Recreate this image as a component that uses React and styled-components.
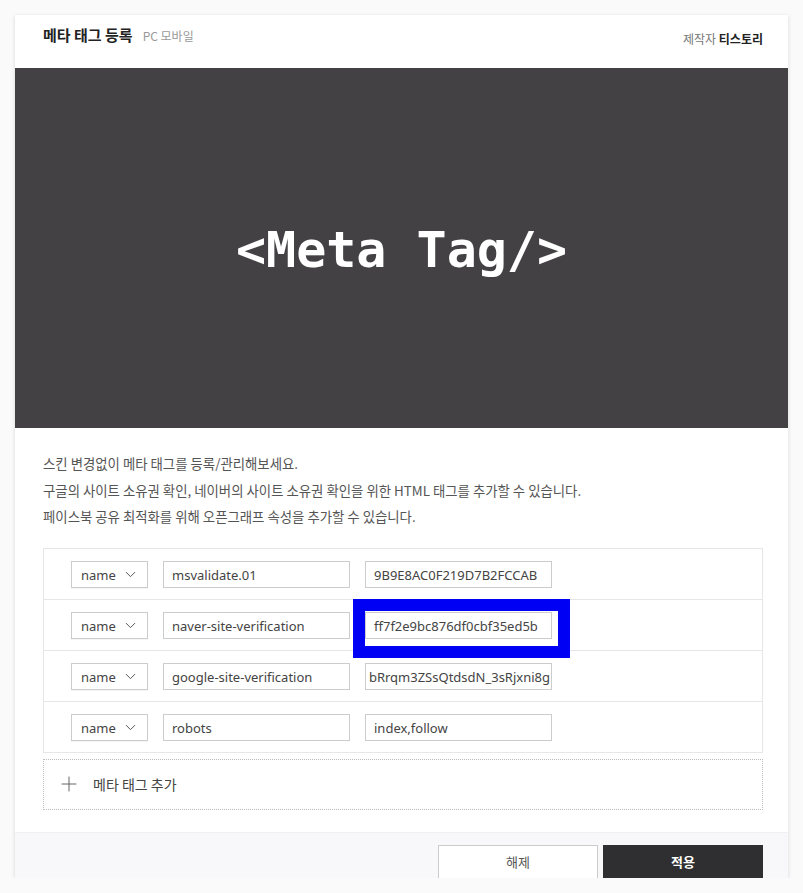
import React from 'react'
import styled, { createGlobalStyle } from 'styled-components'
import { ChevronDown, Plus } from 'lucide-react'

const GlobalStyle = createGlobalStyle`
  html, body {
    margin: 0;
    padding: 0;
    background: #fafafa;
  }
  body {
    font-family: "Noto Sans", "Noto Sans CJK KR", sans-serif;
    color: #333;
  }
`

const metas = [
  { type: 'name', key: 'msvalidate.01', value: '9B9E8AC0F219D7B2FCCAB' },
  { type: 'name', key: 'naver-site-verification', value: 'ff7f2e9bc876df0cbf35ed5b', marked: true },
  { type: 'name', key: 'google-site-verification', value: 'bRrqm3ZSsQtdsdN_3sRjxni8g', tail: true },
  { type: 'name', key: 'robots', value: 'index,follow' },
]

export default function App() {
  return (
    <>
      <GlobalStyle />
      <Page>
        <Card>
          <Header>
            <TitleGroup>
              <Title>메타 태그 등록</Title>
              <Platforms>PC 모바일</Platforms>
            </TitleGroup>
            <Author>
              제작자 <strong>티스토리</strong>
            </Author>
          </Header>

          <Banner>
            <BannerText>&lt;Meta Tag/&gt;</BannerText>
          </Banner>

          <Body>
            <Intro>
              <p>스킨 변경없이 메타 태그를 등록/관리해보세요.</p>
              <p>구글의 사이트 소유권 확인, 네이버의 사이트 소유권 확인을 위한 HTML 태그를 추가할 수 있습니다.</p>
              <p>페이스북 공유 최적화를 위해 오픈그래프 속성을 추가할 수 있습니다.</p>
            </Intro>

            <TagList>
              {metas.map((m) => (
                <TagRow key={m.key}>
                  <Select>
                    <span>{m.type}</span>
                    <ChevronDown size={17} strokeWidth={1.4} color="#555" />
                  </Select>
                  <Field>
                    <FieldText>{m.key}</FieldText>
                  </Field>
                  <ValueCell>
                    <Field $tail={m.tail}>
                      <FieldText>{m.value}</FieldText>
                    </Field>
                    {m.marked && <Marker />}
                  </ValueCell>
                </TagRow>
              ))}
            </TagList>

            <AddRow>
              <Plus size={24} strokeWidth={0.9} color="#555" />
              <span>메타 태그 추가</span>
            </AddRow>
          </Body>

          <Footer>
            <Button>해제</Button>
            <Button $primary>적용</Button>
          </Footer>
        </Card>
      </Page>
    </>
  )
}

const Page = styled.div`
  padding: 15px 15px 0 15px;
  height: 878px;
  box-sizing: border-box;
`

const Card = styled.div`
  width: 773px;
  height: 863px;
  background: #fff;
  box-shadow: 0 1px 4px rgba(0, 0, 0, 0.14);
  display: flex;
  flex-direction: column;
  overflow: hidden;
`

const Header = styled.div`
  height: 53px;
  display: flex;
  justify-content: space-between;
  padding: 0 25px 0 28px;
  flex-shrink: 0;
  box-sizing: border-box;
`

const TitleGroup = styled.div`
  display: flex;
  align-items: baseline;
  gap: 10px;
  padding-top: 9px;
`

const Title = styled.h1`
  margin: 0;
  font-size: 15px;
  font-weight: 700;
  color: #222;
  font-family: "Noto Sans CJK KR", sans-serif;
`

const Platforms = styled.span`
  font-size: 12px;
  color: #999;
  font-family: "Noto Sans CJK KR", sans-serif;
`

const Author = styled.div`
  font-size: 12px;
  color: #777;
  font-family: "Noto Sans CJK KR", sans-serif;
  padding-top: 15px;

  strong {
    color: #222;
    font-weight: 700;
  }
`

const Banner = styled.div`
  height: 360px;
  background: #434144;
  display: flex;
  align-items: center;
  justify-content: center;
  flex-shrink: 0;
`

const BannerText = styled.div`
  font-family: "DejaVu Sans Mono", monospace;
  font-weight: 700;
  font-size: 50px;
  color: #fff;
  margin-top: 3px;
`

const Body = styled.div`
  flex: 1;
  padding: 22px 25px 0 28px;
`

const Intro = styled.div`
  font-family: "Noto Sans CJK KR", sans-serif;
  font-size: 13.4px;
  color: #555;
  line-height: 26.5px;

  p {
    margin: 0;
  }
`

const TagList = styled.div`
  margin-top: 18px;
  border: 1px solid #e6e6e6;
`

const TagRow = styled.div`
  height: 50px;
  display: flex;
  align-items: center;
  gap: 15px;
  padding: 2px 0 0 27px;
  box-sizing: border-box;

  & + & {
    border-top: 1px solid #e6e6e6;
    height: 51px;
  }
`

const Select = styled.div`
  width: 77px;
  height: 27px;
  box-sizing: border-box;
  border: 1px solid #ccc;
  display: flex;
  align-items: center;
  justify-content: space-between;
  padding: 0 8px 0 9px;
  font-size: 13px;
  color: #444;
  box-shadow: 0 1px 1px rgba(0, 0, 0, 0.04);
`

const Field = styled.div`
  width: 187px;
  height: 27px;
  box-sizing: border-box;
  border: 1px solid #ccc;
  display: flex;
  align-items: center;
  justify-content: ${(p) => (p.$tail ? 'flex-end' : 'flex-start')};
  padding: ${(p) => (p.$tail ? '0 1px 0 0' : '0 0 0 8px')};
  overflow: hidden;
  background: #fff;
`

const FieldText = styled.span`
  font-size: 13px;
  color: #444;
  white-space: nowrap;
`

const ValueCell = styled.div`
  position: relative;
`

const Marker = styled.div`
  position: absolute;
  left: -12px;
  top: -13px;
  width: 217px;
  height: 59px;
  box-sizing: border-box;
  border: 12px solid #0000f5;
`

const AddRow = styled.div`
  margin-top: 6px;
  height: 51px;
  box-sizing: border-box;
  border: 1px dotted #bbb;
  display: flex;
  align-items: center;
  gap: 12px;
  padding-left: 13px;
  font-family: "Noto Sans CJK KR", sans-serif;
  font-size: 14px;
  color: #444;
`

const Footer = styled.div`
  height: 46px;
  flex-shrink: 0;
  background: #f8f8fa;
  border-top: 1px solid #f0f0f2;
  display: flex;
  justify-content: flex-end;
  align-items: flex-start;
  gap: 5px;
  padding: 12px 25px 0 0;
  box-sizing: border-box;
`

const Button = styled.button`
  width: 160px;
  height: 44px;
  flex-shrink: 0;
  border: 1px solid ${(p) => (p.$primary ? '#2f2f31' : '#ccc')};
  background: ${(p) => (p.$primary ? '#2f2f31' : '#fff')};
  color: ${(p) => (p.$primary ? '#fff' : '#555')};
  font-family: "Noto Sans CJK KR", sans-serif;
  font-size: 13px;
  font-weight: ${(p) => (p.$primary ? 700 : 400)};
  padding: 0 0 12px 0;
  cursor: pointer;
`
